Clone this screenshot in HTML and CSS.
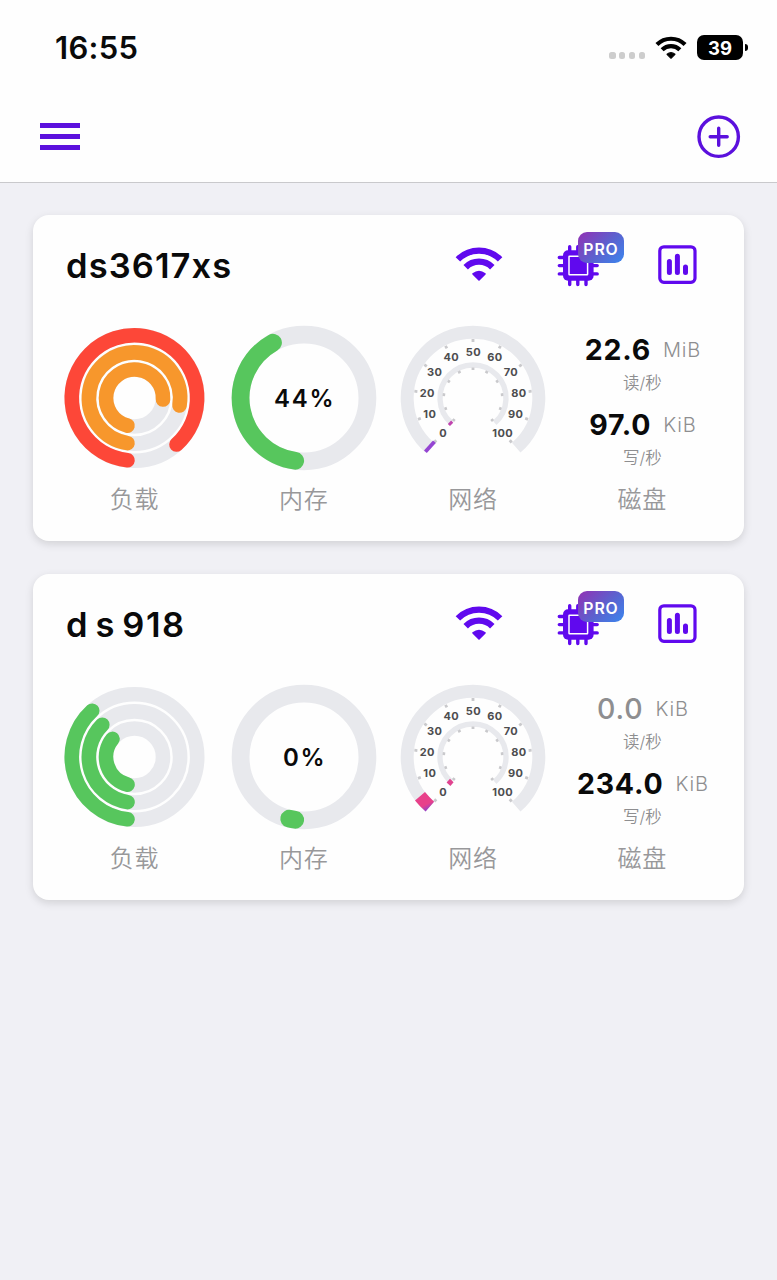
FILE: index.html
```
<!DOCTYPE html>
<html lang="zh-CN">
<head>
    <meta charset="UTF-8">
    <meta name="viewport" content="width=device-width, initial-scale=1.0">
    <title>NAS</title>
    <link rel="stylesheet" href="styles.css">
</head>
<body>
    <!-- shared icons and gauge face -->
    <svg class="defs" width="0" height="0">
        <defs>
            <linearGradient id="pink" x1="0.6" y1="1" x2="0.45" y2="0.7">
                <stop offset="0" stop-color="#8a3fd0"/>
                <stop offset="1" stop-color="#e8408a"/>
            </linearGradient>
        </defs>
        <symbol id="wifi" viewBox="0 6 48 36">
            <path d="M2.9 18.9A29.8 29.8 0 0 1 45.1 18.9M10.7 26.7A18.8 18.8 0 0 1 37.3 26.7" fill="none" stroke="currentColor" stroke-width="6.3"/>
            <path d="M24 39.4L18 33.4Q24 28.6 30 33.4Z" fill="currentColor" stroke="currentColor" stroke-width="1.6" stroke-linejoin="round"/>
        </symbol>
        <symbol id="chip" viewBox="0 0 48 48">
            <path d="M15.7 5.8V43.6M23.8 5.8V43.6M32 5.8V43.6M5.3 16.5H43.2M5.3 24.6H43.2M5.3 32.9H43.2" stroke="currentColor" stroke-width="3.4" stroke-linecap="round"/>
            <rect x="9" y="9.2" width="30.6" height="30.6" rx="5" fill="currentColor"/>
            <rect x="15" y="15.2" width="18.6" height="18.6" rx="0.5" fill="none" stroke="#fff" stroke-width="1.5"/>
        </symbol>
        <symbol id="chart" viewBox="0 0 48 48">
            <rect x="6.8" y="5.8" width="35.2" height="35.5" rx="4" fill="none" stroke="currentColor" stroke-width="3.2"/>
            <path d="M16.4 20.6V31.5M24.4 15.3V31.5M32.5 25.9V31.5" stroke="currentColor" stroke-width="5" stroke-linecap="round"/>
        </symbol>
        <symbol id="gauge" viewBox="-75 -75 150 150">
            <path class="track" stroke-width="13" d="M-43.2 49.7A65.8 65.8 0 1 1 43.2 49.7"/>
            <path class="track" stroke-width="5.4" d="M-21.7 24.9A33 33 0 1 1 21.7 24.9"/>
            <g class="ticks">
                <path id="t" d="M0 -59V-56M0 -30.5V-28"/>
                <use href="#t" transform="rotate(27.8)"/>
                <use href="#t" transform="rotate(55.6)"/>
                <use href="#t" transform="rotate(83.4)"/>
                <use href="#t" transform="rotate(111.2)"/>
                <use href="#t" transform="rotate(139)"/>
                <use href="#t" transform="rotate(-27.8)"/>
                <use href="#t" transform="rotate(-55.6)"/>
                <use href="#t" transform="rotate(-83.4)"/>
                <use href="#t" transform="rotate(-111.2)"/>
                <use href="#t" transform="rotate(-139)"/>
            </g>
        </symbol>
    </svg>

    <header class="top">
        <div class="status-bar">
            <span class="time">16:55</span>
            <div class="status-icons">
                <span class="dots"><i></i><i></i><i></i><i></i></span>
                <svg class="status-wifi"><use href="#wifi"/></svg>
                <span class="battery">39</span>
            </div>
        </div>
        <div class="nav">
            <div class="menu"><span></span><span></span><span></span></div>
            <svg class="add" viewBox="0 0 44 44">
                <circle cx="21.7" cy="21.7" r="19.7"/>
                <path d="M21.7 13.2V30.2M13.2 21.7H30.2"/>
            </svg>
        </div>
    </header>

    <main class="list">
        <section class="card">
            <div class="card-head">
                <h2>ds3617xs</h2>
                <svg class="icon"><use href="#wifi" x="0" y="5.5" width="48" height="36"/></svg>
                <div class="icon-box">
                    <svg class="icon"><use href="#chip"/></svg>
                    <span class="pro">PRO</span>
                </div>
                <svg class="icon"><use href="#chart"/></svg>
            </div>
            <div class="stats">
                <div class="stat">
                    <div class="chart">
                        <svg viewBox="-74.5 -75 150 150">
                            <g class="track load">
                                <circle r="62.7"/>
                                <circle r="45.6"/>
                                <circle r="28.5"/>
                            </g>
                            <g class="load bar">
                                <path class="red" d="M-7 62.3A62.7 62.7 0 1 1 42 46.5"/>
                                <path class="orange" d="M-7 45.1A45.6 45.6 0 1 1 45 7.5"/>
                                <path class="orange" d="M-7 27.6A28.5 28.5 0 1 1 28.5 1.5"/>
                            </g>
                        </svg>
                    </div>
                    <p class="label">负载</p>
                </div>
                <div class="stat">
                    <div class="chart ring">
                        <svg viewBox="-75 -75 150 150">
                            <circle class="track" r="63.4" stroke-width="17.8"/>
                            <path class="bar green memory" d="M-8.8 62.8A63.4 63.4 0 0 1 -31 -55.3"/>
                        </svg>
                        <span class="percent">44%</span>
                    </div>
                    <p class="label">内存</p>
                </div>
                <div class="stat">
                    <div class="chart">
                        <svg viewBox="-75 -75 150 150">
                            <use href="#gauge" x="-75" y="-75" width="150" height="150"/>
                            <g class="scale">
                                <text x="-29.8" y="39.2">0</text>
                                <text x="-43.2" y="20.2">10</text>
                                <text x="-45.8" y="-1.1">20</text>
                                <text x="-38.4" y="-22.4">30</text>
                                <text x="-21.8" y="-37">40</text>
                                <text x="0.4" y="-42.4">50</text>
                                <text x="21.9" y="-37">60</text>
                                <text x="37.9" y="-22.4">70</text>
                                <text x="45.9" y="-1.1">80</text>
                                <text x="42.6" y="20.2">90</text>
                                <text x="29.7" y="39.2">100</text>
                            </g>
                            <path d="M-38.6 43.8L-47.6 53.8" stroke="#9444d2" stroke-width="3.8"/>
                            <path d="M-20.8 23.6L-24.1 27" stroke="#c044ae" stroke-width="3"/>
                        </svg>
                    </div>
                    <p class="label">网络</p>
                </div>
                <div class="stat">
                    <div class="disk">
                        <p class="speed"><b>22.6</b><span>MiB</span></p>
                        <p class="unit">读/秒</p>
                        <p class="speed"><b>97.0</b><span>KiB</span></p>
                        <p class="unit">写/秒</p>
                    </div>
                    <p class="label">磁盘</p>
                </div>
            </div>
        </section>

        <section class="card">
            <div class="card-head">
                <h2 class="spaced">d s 918</h2>
                <svg class="icon"><use href="#wifi" x="0" y="5.5" width="48" height="36"/></svg>
                <div class="icon-box">
                    <svg class="icon"><use href="#chip"/></svg>
                    <span class="pro">PRO</span>
                </div>
                <svg class="icon"><use href="#chart"/></svg>
            </div>
            <div class="stats">
                <div class="stat">
                    <div class="chart">
                        <svg viewBox="-74.5 -75 150 150">
                            <g class="track load">
                                <circle r="62.7"/>
                                <circle r="45.6"/>
                                <circle r="28.5"/>
                            </g>
                            <g class="load bar green">
                                <path d="M-7 62.3A62.7 62.7 0 0 1 -42.3 -46.3"/>
                                <path d="M-7 45.1A45.6 45.6 0 0 1 -32.2 -32.3"/>
                                <path d="M-7 27.6A28.5 28.5 0 0 1 -22 -18.1"/>
                            </g>
                        </svg>
                    </div>
                    <p class="label">负载</p>
                </div>
                <div class="stat">
                    <div class="chart ring">
                        <svg viewBox="-75 -75 150 150">
                            <circle class="track" r="63.4" stroke-width="17.8"/>
                            <path class="bar green memory" d="M-8.8 62.8A63.4 63.4 0 0 1 -14.8 61.7"/>
                        </svg>
                        <span class="percent">0%</span>
                    </div>
                    <p class="label">内存</p>
                </div>
                <div class="stat">
                    <div class="chart">
                        <svg viewBox="-75 -75 150 150">
                            <use href="#gauge" x="-75" y="-75" width="150" height="150"/>
                            <g class="scale">
                                <text x="-29.8" y="39.2">0</text>
                                <text x="-43.2" y="20.2">10</text>
                                <text x="-45.8" y="-1.1">20</text>
                                <text x="-38.4" y="-22.4">30</text>
                                <text x="-21.8" y="-37">40</text>
                                <text x="0.4" y="-42.4">50</text>
                                <text x="21.9" y="-37">60</text>
                                <text x="37.9" y="-22.4">70</text>
                                <text x="45.9" y="-1.1">80</text>
                                <text x="42.6" y="20.2">90</text>
                                <text x="29.7" y="39.2">100</text>
                            </g>
                            <path d="M-38.9 44.7L-47.4 54.6Q-53.5 49.2 -58 43.6L-48 35.1Q-43.6 40.5 -38.9 44.7Z" fill="url(#pink)"/>
                            <path d="M-23 21.8L-19.4 25.2L-22.6 29L-26.4 25.4Z" fill="#e0438f"/>
                        </svg>
                    </div>
                    <p class="label">网络</p>
                </div>
                <div class="stat">
                    <div class="disk">
                        <p class="speed idle"><b>0.0</b><span>KiB</span></p>
                        <p class="unit">读/秒</p>
                        <p class="speed"><b>234.0</b><span>KiB</span></p>
                        <p class="unit">写/秒</p>
                    </div>
                    <p class="label">磁盘</p>
                </div>
            </div>
        </section>
    </main>
</body>
</html>
```

FILE: styles.css
```
* {
    box-sizing: border-box;
}

body {
    margin: 0;
    min-height: 100vh;
    background: #f0f0f5;
    color: #0a0a0a;
    font-family: Inter, "Noto Sans CJK SC", sans-serif;
}

h2, p {
    margin: 0;
}

.defs {
    position: absolute;
}

.top {
    height: 183px;
    background: #fefefe;
    border-bottom: 1px solid #c9c9cc;
}

.status-bar {
    display: flex;
    justify-content: space-between;
    align-items: center;
    height: 95px;
    padding: 0 34px 0 55px;
}

.time {
    font-size: 31px;
    font-weight: 600;
    letter-spacing: 0.3px;
}

.status-icons {
    display: flex;
    align-items: center;
}

.dots {
    display: flex;
    gap: 3.5px;
    margin: 16px 10px 0 0;
}

.dots i {
    width: 6.3px;
    height: 6.3px;
    border-radius: 2.5px;
    background: #cdcdcd;
}

.status-wifi {
    width: 32px;
    height: 24px;
    margin-right: 10px;
    color: #000;
}

.battery {
    position: relative;
    width: 46px;
    height: 25px;
    border-radius: 7px;
    background: #000;
    color: #fff;
    font-size: 18.5px;
    font-weight: 700;
    line-height: 26px;
    text-align: center;
}

.battery::after {
    content: "";
    position: absolute;
    top: 9px;
    right: -4.5px;
    width: 3px;
    height: 7px;
    border-radius: 0 3px 3px 0;
    background: #000;
}

.nav {
    display: flex;
    justify-content: space-between;
    align-items: center;
    height: 83px;
    padding: 0 36px 0 39.7px;
}

.menu {
    display: flex;
    flex-direction: column;
    gap: 6.5px;
    width: 40.5px;
}

.menu span {
    height: 4.7px;
    background: #5b10dd;
}

.add {
    width: 44px;
    height: 44px;
    fill: none;
    stroke: #5b10dd;
    stroke-width: 3.4;
    stroke-linecap: round;
}

.list {
    display: flex;
    flex-direction: column;
    gap: 33px;
    padding: 32.4px 33px;
}

.card {
    height: 326px;
    background: #fefefe;
    border-radius: 16px;
    box-shadow: 0 3px 9px rgba(0, 0, 0, 0.13);
}

.card-head {
    display: flex;
    align-items: center;
    gap: 51px;
    height: 100px;
    padding: 0 43px 0 33px;
}

.card-head h2 {
    flex: 1;
    font-size: 34.5px;
    font-weight: 600;
    letter-spacing: 1.1px;
}

.card-head .spaced {
    letter-spacing: 1.6px;
    word-spacing: -4px;
}

.icon {
    display: block;
    width: 48px;
    height: 48px;
    color: #6009ee;
}

.icon-box {
    position: relative;
}

.pro {
    position: absolute;
    top: -9.5px;
    left: 24px;
    width: 46px;
    height: 31px;
    border-radius: 9px;
    background: linear-gradient(135deg, #9230b4 0%, #5b62cf 55%, #3a86ee 100%);
    color: #fff;
    font-size: 15.8px;
    font-weight: 600;
    letter-spacing: 0.9px;
    line-height: 35px;
    text-align: center;
}

.stats {
    display: grid;
    grid-template-columns: repeat(4, 1fr);
    padding: 0 17px;
}

.chart {
    display: grid;
    place-items: center;
    height: 165px;
}

.chart > * {
    grid-area: 1 / 1;
}

.chart svg {
    width: 150px;
    height: 150px;
}

.track {
    fill: none;
    stroke: #e8e9ed;
}

.load {
    fill: none;
    stroke-width: 14.6;
}

.bar {
    fill: none;
    stroke-linecap: round;
}

.memory {
    stroke-width: 17.8;
}

.red {
    stroke: #fd4738;
}

.orange {
    stroke: #f7972c;
}

.green {
    stroke: #57c65d;
}

.percent {
    padding: 2px 0 0 1.5px;
    font-size: 24px;
    font-weight: 600;
    letter-spacing: 1.7px;
}

.ticks {
    stroke: #c9c9cc;
    stroke-width: 2.8;
}

.scale {
    fill: #4d4d4f;
    font-size: 11px;
    font-weight: 700;
    letter-spacing: 0.4px;
    text-anchor: middle;
}

.label {
    height: 38px;
    color: #98989a;
    font-size: 24px;
    font-weight: 350;
    letter-spacing: 0.8px;
    line-height: 39px;
    text-align: center;
}

.disk {
    height: 165px;
    padding-top: 14.6px;
}

.speed {
    display: flex;
    justify-content: center;
    align-items: center;
    gap: 12px;
    height: 40px;
    padding-left: 1px;
    line-height: 40px;
}

.speed b {
    font-size: 28.5px;
    font-weight: 700;
    letter-spacing: 0.8px;
}

.speed span {
    color: #8e8e90;
    font-size: 20px;
    font-weight: 300;
    letter-spacing: 0.8px;
}

.idle b {
    color: #8e8e90;
    font-weight: 500;
}

.unit {
    height: 25px;
    margin-bottom: 10px;
    color: #8e8e90;
    font-size: 16.5px;
    font-weight: 350;
    line-height: 27px;
    text-align: center;
}
```
